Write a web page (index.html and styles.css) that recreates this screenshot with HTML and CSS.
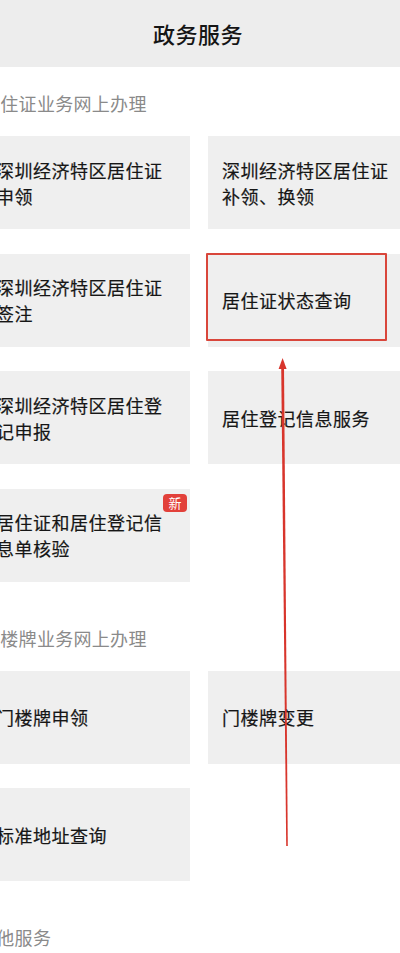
FILE: index.html
```html
<!DOCTYPE html>
<html lang="zh-CN">
<head>
  <meta charset="utf-8">
  <title>政务服务</title>
  <link rel="stylesheet" href="styles.css">
</head>
<body>
  <div class="page">
    <div class="header">政务服务</div>

    <div class="content">
      <div class="section">
        <div class="section_title">居住证业务网上办理</div>
        <div class="grid">
          <div class="card">深圳经济特区居住证申领</div>
          <div class="card">深圳经济特区居住证补领、换领</div>
          <div class="card">深圳经济特区居住证签注</div>
          <div class="card">居住证状态查询</div>
          <div class="card">深圳经济特区居住登记申报</div>
          <div class="card">居住登记信息服务</div>
          <div class="card">居住证和居住登记信息单核验<span class="badge">新</span></div>
        </div>
      </div>

      <div class="section">
        <div class="section_title">门楼牌业务网上办理</div>
        <div class="grid">
          <div class="card">门楼牌申领</div>
          <div class="card">门楼牌变更</div>
          <div class="card">标准地址查询</div>
        </div>
      </div>

      <div class="section">
        <div class="section_title other">其他服务</div>
      </div>
    </div>

    <!-- annotation drawn over the screenshot -->
    <div class="mark_box"></div>
    <svg class="mark_arrow" width="400" height="953" viewBox="0 0 400 953">
      <path d="M284 366 L287.8 846 L286.2 846 L281.2 366 Z" fill="#d8352c"/>
      <path d="M282.6 358 L278.6 369 L286.6 369 Z" fill="#d8352c"/>
    </svg>
  </div>
</body>
</html>
```

FILE: styles.css
```css
html, body {
  margin: 0;
  padding: 0;
  background: #fff;
}

body {
  width: 400px;
  overflow: hidden;
  font-family: "Noto Sans CJK SC", "Noto Sans", sans-serif;
}

.page {
  position: relative;
  width: 400px;
  min-height: 953px;
}

.header {
  height: 67px;
  line-height: 67px;
  background: #ededed;
  text-align: center;
  padding-right: 4px;
  font-size: 22px;
  font-weight: 500;
  color: #151515;
  letter-spacing: 0.5px;
}

/* the shot is cropped on the left, so the content starts off-screen */
.content {
  width: 434px;
  margin-left: -18px;
}

.section {
  padding-bottom: 20px;
}

.section_title {
  padding-top: 24px;
  height: 24px;
  line-height: 24px;
  margin-bottom: 21px;
  font-size: 18px;
  color: #8a8a8a;
  letter-spacing: 0.3px;
}

.section_title.other {
  margin-left: -4px;
}

.grid {
  display: grid;
  grid-template-columns: 208px 208px;
  gap: 24.5px 18px;
}

.card {
  position: relative;
  height: 93px;
  box-sizing: border-box;
  padding: 0 20px 0 14px;
  display: flex;
  align-items: center;
  background: #efefef;
  font-size: 18px;
  line-height: 26px;
  letter-spacing: 0.5px;
  color: #161616;
  -webkit-text-stroke: 0.2px #161616;
}

.badge {
  position: absolute;
  top: 5px;
  right: 3px;
  width: 24px;
  height: 18px;
  line-height: 18px;
  border-radius: 4px;
  background: #e2403a;
  color: #fff;
  font-size: 13px;
  letter-spacing: 0;
  text-align: center;
  -webkit-text-stroke: 0;
}

.mark_box {
  position: absolute;
  left: 206px;
  top: 253px;
  width: 177px;
  height: 84px;
  border: 2px solid #d9463b;
  border-radius: 1px;
}

.mark_arrow {
  position: absolute;
  left: 0;
  top: 0;
}
```
